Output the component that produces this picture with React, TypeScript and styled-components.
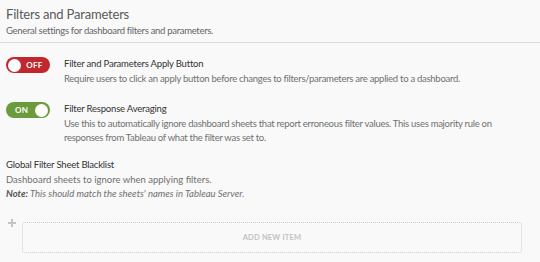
import React from "react";
import styled, { createGlobalStyle } from "styled-components";

const Global = createGlobalStyle`
  html, body { margin: 0; padding: 0; background: #f9f9f9; }
  body { font-family: Lato, "Liberation Sans", sans-serif; }
`;

const Page = styled.div`
  width: 540px;
  height: 262px;
  background: #f9f9f9;
  overflow: hidden;
  box-sizing: border-box;
`;

const Header = styled.header`
  padding: 6px 6px 5px;
  border-bottom: 1px solid #dcdcdc;
`;

const Title = styled.h1`
  margin: 0;
  font-size: 13px;
  font-weight: 400;
  color: #5a5a5a;
  line-height: 16px;
  letter-spacing: -0.2px;
`;

const Subtitle = styled.p`
  margin: 3px 0 0;
  font-size: 9.5px;
  color: #666;
  line-height: 12px;
  letter-spacing: -0.3px;
`;

const Body = styled.div`
  padding: 14px 6px 0;
  display: flex;
  flex-direction: column;
`;

const SettingRow = styled.div`
  display: flex;
  gap: 14px;
  align-items: flex-start;
  margin-bottom: 16px;
`;

const Toggle = styled.div<{ $on: boolean }>`
  flex: none;
  width: 44px;
  height: 16px;
  border-radius: 8px;
  background: ${(p) => (p.$on ? "#6c9b3c" : "#c1272d")};
  display: flex;
  flex-direction: ${(p) => (p.$on ? "row-reverse" : "row")};
  align-items: center;
  padding: 0 2px;
  box-sizing: border-box;
`;

const Knob = styled.span`
  width: 13px;
  height: 13px;
  border-radius: 50%;
  background: #fff;
  flex: none;
`;

const ToggleLabel = styled.span`
  flex: 1;
  text-align: center;
  color: #fff;
  font-size: 8px;
  font-weight: 700;
  letter-spacing: 0.3px;
`;

const SettingText = styled.div`
  display: flex;
  flex-direction: column;
  max-width: 440px;
`;

const SettingTitle = styled.div`
  font-size: 9.5px;
  color: #333;
  line-height: 12px;
  margin-top: 1px;
  letter-spacing: -0.2px;
`;

const Description = styled.div<{ $tight?: boolean }>`
  font-size: 9.5px;
  color: #707070;
  line-height: 14px;
  margin-top: 2px;
  letter-spacing: ${(p) => (p.$tight ? "-0.28px" : "0")};
`;

const Section = styled.div`
  margin-top: -3px;
  display: flex;
  flex-direction: column;
`;

const Note = styled.div`
  font-size: 9.5px;
  color: #707070;
  font-style: italic;
  line-height: 14px;
  letter-spacing: 0;
  b { color: #555; font-weight: 700; }
`;

const ItemRow = styled.div`
  display: flex;
  gap: 6px;
  margin-top: 21px;
  align-items: flex-start;
`;

const Plus = styled.div`
  width: 8px;
  height: 8px;
  position: relative;
  margin-top: -3px;
  margin-left: 2px;
  &::before, &::after {
    content: "";
    position: absolute;
    background: #c4c4c4;
  }
  &::before { left: 0; right: 0; top: 3px; height: 2px; }
  &::after { top: 0; bottom: 0; left: 3px; width: 2px; }
`;

const AddBox = styled.div`
  flex: none;
  width: 500px;
  height: 31px;
  border: 1px dotted #cfcfcf;
  border-radius: 3px;
  box-sizing: border-box;
  display: flex;
  align-items: center;
  justify-content: center;
  font-size: 7.5px;
  font-weight: 700;
  color: #c2c2c2;
  letter-spacing: 0.2px;
`;

const settings = [
  {
    on: false,
    title: "Filter and Parameters Apply Button",
    desc: "Require users to click an apply button before changes to filters/parameters are applied to a dashboard.",
  },
  {
    on: true,
    title: "Filter Response Averaging",
    desc: "Use this to automatically ignore dashboard sheets that report erroneous filter values. This uses majority rule on responses from Tableau of what the filter was set to.",
  },
];

export default function App() {
  return (
    <Page>
      <Global />
      <Header>
        <Title>Filters and Parameters</Title>
        <Subtitle>General settings for dashboard filters and parameters.</Subtitle>
      </Header>
      <Body>
        {settings.map((s) => (
          <SettingRow key={s.title}>
            <Toggle $on={s.on}>
              <Knob />
              <ToggleLabel>{s.on ? "ON" : "OFF"}</ToggleLabel>
            </Toggle>
            <SettingText>
              <SettingTitle>{s.title}</SettingTitle>
              <Description $tight>{s.desc}</Description>
            </SettingText>
          </SettingRow>
        ))}
        <Section>
          <SettingTitle>Global Filter Sheet Blacklist</SettingTitle>
          <Description>Dashboard sheets to ignore when applying filters.</Description>
          <Note>
            <b>Note:</b> This should match the sheets' names in Tableau Server.
          </Note>
        </Section>
        <ItemRow>
          <Plus />
          <AddBox>ADD NEW ITEM</AddBox>
        </ItemRow>
      </Body>
    </Page>
  );
}
